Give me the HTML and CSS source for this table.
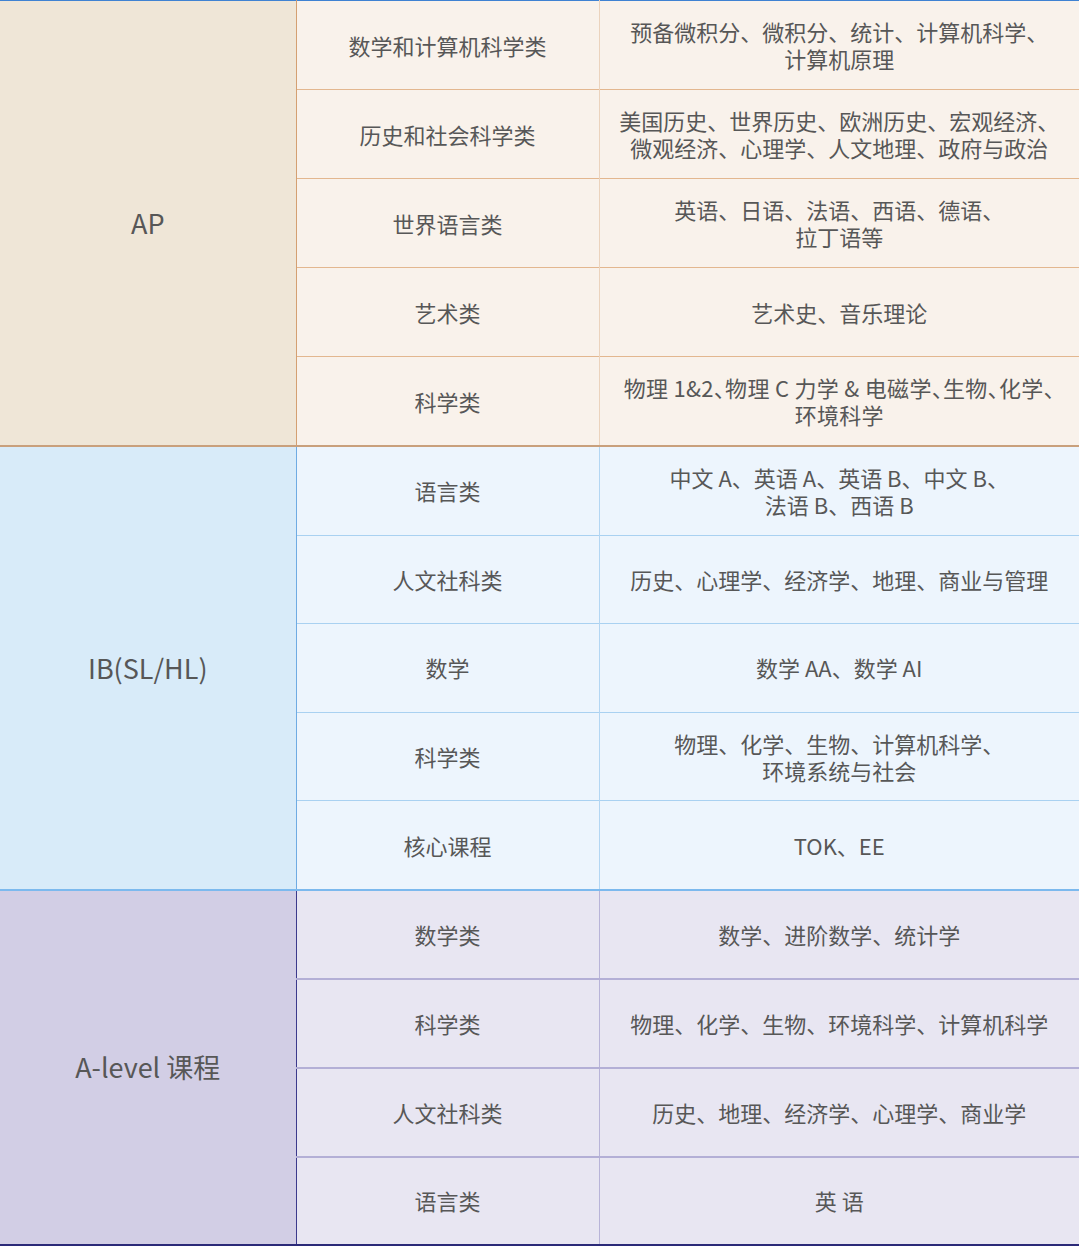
FILE: index.html
```html
<!DOCTYPE html>
<html lang="zh-CN">
<head>
<meta charset="utf-8">
<link rel="stylesheet" href="styles.css">
</head>
<body>
<table class="courses">
  <colgroup><col class="c1"><col class="c2"><col class="c3"></colgroup>
  <tbody class="ap">
    <tr class="first"><td class="sys" rowspan="5">AP</td><td class="cat">数学和计算机科学类</td><td class="sub">预备微积分、微积分、统计、计算机科学、<br>计算机原理</td></tr>
    <tr><td class="cat">历史和社会科学类</td><td class="sub">美国历史、世界历史、欧洲历史、宏观经济、<br>微观经济、心理学、人文地理、政府与政治</td></tr>
    <tr><td class="cat">世界语言类</td><td class="sub">英语、日语、法语、西语、德语、<br>拉丁语等</td></tr>
    <tr><td class="cat">艺术类</td><td class="sub">艺术史、音乐理论</td></tr>
    <tr class="last"><td class="cat">科学类</td><td class="sub tight">物理 1&amp;2、物理 C 力学 &amp; 电磁学、生物、化学、<br>环境科学</td></tr>
  </tbody>
  <tbody class="ib">
    <tr class="first"><td class="sys" rowspan="5">IB(SL/HL)</td><td class="cat">语言类</td><td class="sub">中文 A、英语 A、英语 B、中文 B、<br>法语 B、西语 B</td></tr>
    <tr><td class="cat">人文社科类</td><td class="sub">历史、心理学、经济学、地理、商业与管理</td></tr>
    <tr><td class="cat">数学</td><td class="sub">数学 AA、数学 AI</td></tr>
    <tr><td class="cat">科学类</td><td class="sub">物理、化学、生物、计算机科学、<br>环境系统与社会</td></tr>
    <tr class="last"><td class="cat">核心课程</td><td class="sub">TOK、EE</td></tr>
  </tbody>
  <tbody class="al">
    <tr class="first"><td class="sys" rowspan="4">A-level 课程</td><td class="cat">数学类</td><td class="sub">数学、进阶数学、统计学</td></tr>
    <tr><td class="cat">科学类</td><td class="sub">物理、化学、生物、环境科学、计算机科学</td></tr>
    <tr><td class="cat">人文社科类</td><td class="sub">历史、地理、经济学、心理学、商业学</td></tr>
    <tr class="last"><td class="cat">语言类</td><td class="sub">英 语</td></tr>
  </tbody>
</table>
</body>
</html>
```
FILE: styles.css
```css
html, body {
  margin: 0;
  padding: 0;
  background: #ffffff;
}
body {
  font-family: "Noto Sans CJK SC", "Noto Sans", sans-serif;
  color: #575757;
}
.courses {
  width: 1079px;
  table-layout: fixed;
  border-collapse: collapse;
  border-spacing: 0;
  border-top: 1px solid #3f82d2;
  border-bottom: 2px solid #2b2a78;
}
.c1 { width: 296px; }
.c2 { width: 303px; }
.c3 { width: 480px; }
.courses td {
  padding: 0 4px;
  text-align: center;
  vertical-align: middle;
  font-size: 22px;
  line-height: 27px;
}
.courses .sys {
  font-size: 27px;
  line-height: 32px;
}
.courses .tight {
  font-feature-settings: "halt" 1;
  letter-spacing: 0.3px;
}
.ap td { height: 88px; }
.ib td { height: 87.6px; }
.al td { height: 87px; }
.al .last td { height: 86px; }

.ap .sys { background: #efe6d7; border-right: 1px solid #d4a072; }
.ap .cat, .ap .sub { background: #f9f2eb; }
.ap .cat { border-right: 1px solid #ebd3bd; }
.ap tr + tr .cat, .ap tr + tr .sub { border-top: 1px solid #e3b78f; }
.ap .last td, .ap .sys { border-bottom: 2px solid #c9a07c; }

.ib .sys { background: #d8ebf9; border-right: 1px solid #6fabe3; }
.ib .cat, .ib .sub { background: #edf5fd; }
.ib .cat { border-right: 1px solid #b3d6f3; }
.ib tr + tr .cat, .ib tr + tr .sub { border-top: 1px solid #a9d1f1; }
.ib .last td, .ib .sys { border-bottom: 2px solid #7cb9ee; }

.al .sys { background: #d2cee5; border-right: 1px solid #3c3a8c; }
.al .cat, .al .sub { background: #e8e6f2; }
.al .cat { border-right: 1px solid #b8b4d8; }
.al tr + tr .cat, .al tr + tr .sub { border-top: 2px solid #b3afd6; }
```
